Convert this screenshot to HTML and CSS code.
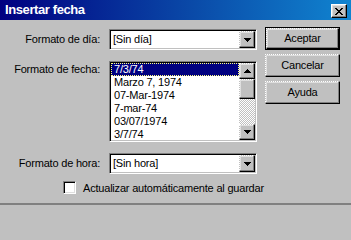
FILE: index.html
```html
<!DOCTYPE html>
<html lang="es">
<head>
<meta charset="utf-8">
<title>Insertar fecha</title>
<link rel="stylesheet" href="styles.css">
</head>
<body>
<div class="window">
  <div class="titlebar">
    <span class="title">Insertar fecha</span>
    <div class="close">
      <svg width="8" height="7" viewBox="0 0 8 7" shape-rendering="crispEdges">
        <path d="M0 0h2v1h-2zM6 0h2v1h-2zM1 1h2v1h-2zM5 1h2v1h-2zM2 2h4v1h-4zM3 3h2v1h-2zM2 4h4v1h-4zM1 5h2v1h-2zM5 5h2v1h-2zM0 6h2v1h-2zM6 6h2v1h-2z" fill="#000"/>
      </svg>
    </div>
  </div>
  <div class="content">
    <div class="left">
      <div class="form">
        <label class="lbl">Formato de día:</label>
        <div class="combo">
          <span class="combo-text">[Sin día]</span>
          <span class="raised drop">
            <svg width="7" height="4" viewBox="0 0 7 4" shape-rendering="crispEdges"><path d="M0 0h7v1h-7zM1 1h5v1h-5zM2 2h3v1h-3zM3 3h1v1h-1z" fill="#000"/></svg>
          </span>
        </div>

        <label class="lbl lbl-top">Formato de fecha:</label>
        <div class="list">
          <ul class="items">
            <li class="item selected">7/3/74</li>
            <li class="item">Marzo 7, 1974</li>
            <li class="item">07-Mar-1974</li>
            <li class="item">7-mar-74</li>
            <li class="item">03/07/1974</li>
            <li class="item">3/7/74</li>
          </ul>
          <div class="vscroll">
            <span class="raised sbtn">
              <svg width="7" height="4" viewBox="0 0 7 4" shape-rendering="crispEdges"><path d="M3 0h1v1h-1zM2 1h3v1h-3zM1 2h5v1h-5zM0 3h7v1h-7z" fill="#000"/></svg>
            </span>
            <span class="raised thumb"></span>
            <span class="track"></span>
            <span class="raised sbtn">
              <svg width="7" height="4" viewBox="0 0 7 4" shape-rendering="crispEdges"><path d="M0 0h7v1h-7zM1 1h5v1h-5zM2 2h3v1h-3zM3 3h1v1h-1z" fill="#000"/></svg>
            </span>
          </div>
        </div>

        <label class="lbl">Formato de hora:</label>
        <div class="combo">
          <span class="combo-text">[Sin hora]</span>
          <span class="raised drop">
            <svg width="7" height="4" viewBox="0 0 7 4" shape-rendering="crispEdges"><path d="M0 0h7v1h-7zM1 1h5v1h-5zM2 2h3v1h-3zM3 3h1v1h-1z" fill="#000"/></svg>
          </span>
        </div>
      </div>
      <div class="check-row">
        <span class="checkbox"></span>
        <span class="check-label">Actualizar automáticamente al guardar</span>
      </div>
    </div>
    <div class="buttons">
      <div class="default-frame"><div class="raised btn">Aceptar</div></div>
      <div class="raised btn">Cancelar</div>
      <div class="raised btn">Ayuda</div>
    </div>
  </div>
</div>
</body>
</html>
```
FILE: styles.css
```css
* { box-sizing: border-box; }

html, body {
  margin: 0;
  padding: 0;
  background: #c0c0c0;
}

body {
  font-family: "Liberation Sans", Arial, sans-serif;
  font-size: 11px;
  letter-spacing: -0.2px;
  color: #000;
}

.window {
  width: 351px;
  height: 205px;
  background: #c0c0c0;
  border-bottom: 2px solid #808080;
  display: flex;
  flex-direction: column;
}

.titlebar {
  height: 20px;
  flex: none;
  display: flex;
  align-items: center;
  justify-content: space-between;
  padding: 0 4px 0 5px;
  background: linear-gradient(90deg, #000080 0%, #0a4aa8 55%, #1084d0 100%);
}

.title {
  color: #fff;
  font-weight: bold;
  font-size: 13px;
  letter-spacing: -0.4px;
  line-height: 20px;
}

.close {
  width: 16px;
  height: 14px;
  margin-top: 2px;
  background: #c0c0c0;
  border: 1px solid;
  border-color: #fff #000 #000 #fff;
  box-shadow: inset -1px -1px #808080, inset 1px 1px #dfdfdf;
  display: flex;
  align-items: center;
  justify-content: center;
}

.raised {
  background: #c0c0c0;
  border: 1px solid;
  border-style: dotted solid solid dotted;
  border-color: #fff #000 #000 #fff;
  box-shadow: inset -1px -1px #808080, inset 1px 1px #dfdfdf;
}

.content {
  flex: 1;
  display: flex;
  padding-top: 7px;
}

.left {
  width: 257px;
  padding-top: 2px;
}

.form {
  display: grid;
  grid-template-columns: 100px 148px;
  column-gap: 9px;
  row-gap: 11px;
  align-items: center;
}

.lbl {
  text-align: right;
  white-space: nowrap;
  line-height: 13px;
}

.lbl-top {
  align-self: start;
  padding-top: 2px;
}

.combo {
  height: 21px;
  padding: 1px;
  background: #fff;
  border: 1px solid;
  border-style: solid dotted dotted solid;
  border-color: #808080 #fff #fff #808080;
  box-shadow: inset 1px 1px #000, inset -1px -1px #c0c0c0;
  display: flex;
  align-items: center;
}

.combo-text {
  flex: 1;
  padding-left: 2px;
  line-height: 13px;
}

.drop {
  width: 16px;
  height: 17px;
  flex: none;
  display: flex;
  align-items: center;
  justify-content: center;
}

.list {
  height: 81px;
  padding: 1px;
  background: #fff;
  border: 1px solid;
  border-style: solid dotted dotted solid;
  border-color: #808080 #fff #fff #808080;
  box-shadow: inset 1px 1px #000, inset -1px -1px #c0c0c0;
  display: flex;
}

.items {
  flex: 1;
  margin: 0;
  padding: 0;
  list-style: none;
  overflow: hidden;
  background: #fff;
}

.item {
  height: 13px;
  line-height: 13px;
  padding-left: 3px;
  white-space: nowrap;
}

.item.selected {
  background: #000080;
  color: #fff;
  outline: 1px dotted #ffff80;
  outline-offset: -1px;
}

.vscroll {
  width: 16px;
  flex: none;
  display: flex;
  flex-direction: column;
}

.sbtn {
  height: 16px;
  flex: none;
  display: flex;
  align-items: center;
  justify-content: center;
}

.thumb {
  height: 20px;
  flex: none;
}

.track {
  flex: 1;
  background: repeating-conic-gradient(#c0c0c0 0 25%, #fff 0 50%) 0 0 / 2px 2px;
}

.check-row {
  display: flex;
  align-items: center;
  gap: 7px;
  margin-top: 6px;
  padding-left: 63px;
}

.checkbox {
  width: 13px;
  height: 13px;
  flex: none;
  background: #fff;
  border: 1px solid;
  border-style: solid dotted dotted solid;
  border-color: #808080 #fff #fff #808080;
  box-shadow: inset 1px 1px #000, inset -1px -1px #dfdfdf;
}

.check-label {
  white-space: nowrap;
  line-height: 13px;
  padding-top: 2px;
}

.buttons {
  margin-left: 8px;
  width: 75px;
  display: flex;
  flex-direction: column;
  gap: 4px;
}

.default-frame {
  border: 1px solid #000;
  height: 23px;
}

.default-frame .btn {
  height: 21px;
}

.btn {
  height: 23px;
  display: flex;
  align-items: center;
  justify-content: center;
  line-height: 13px;
}
```
